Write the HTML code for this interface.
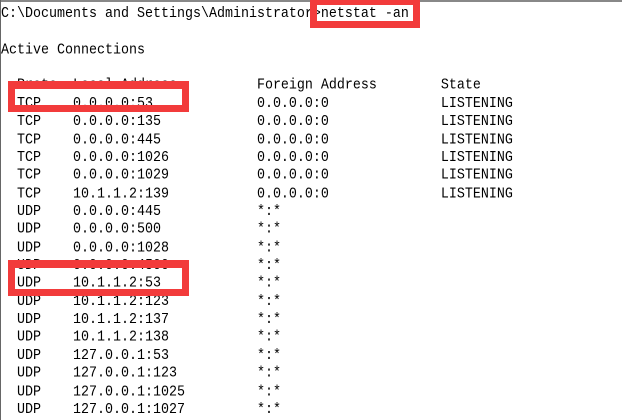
<!DOCTYPE html>
<html><head><meta charset="utf-8"><style>
html,body{margin:0;padding:0;background:#fff;width:622px;height:420px;overflow:hidden;position:relative}
pre{position:absolute;left:1px;top:6px;margin:0;font-family:"Liberation Mono",monospace;font-size:13.33px;line-height:18px;color:#000;letter-spacing:0;transform:scaleY(1.1);transform-origin:0 0}
.bl{position:absolute;left:0;top:0;width:1px;height:420px;background:#666}
.bt{position:absolute;left:0;top:0;width:622px;height:2px;background:#888}
.box{position:absolute;border:7px solid #f23b3b;box-sizing:border-box}
</style></head><body>
<div class="bt"></div><div class="bl"></div>
<pre style="line-height:16.36px">C:\Documents and Settings\Administrator&gt;netstat -an

Active Connections

  Proto  Local Address          Foreign Address        State
  TCP    0.0.0.0:53             0.0.0.0:0              LISTENING
  TCP    0.0.0.0:135            0.0.0.0:0              LISTENING
  TCP    0.0.0.0:445            0.0.0.0:0              LISTENING
  TCP    0.0.0.0:1026           0.0.0.0:0              LISTENING
  TCP    0.0.0.0:1029           0.0.0.0:0              LISTENING
  TCP    10.1.1.2:139           0.0.0.0:0              LISTENING
  UDP    0.0.0.0:445            *:*
  UDP    0.0.0.0:500            *:*
  UDP    0.0.0.0:1028           *:*
  UDP    0.0.0.0:4500           *:*
  UDP    10.1.1.2:53            *:*
  UDP    10.1.1.2:123           *:*
  UDP    10.1.1.2:137           *:*
  UDP    10.1.1.2:138           *:*
  UDP    127.0.0.1:53           *:*
  UDP    127.0.0.1:123          *:*
  UDP    127.0.0.1:1025         *:*
  UDP    127.0.0.1:1027         *:*</pre>
<div class="box" style="left:310px;top:-2px;width:110px;height:30px"></div>
<div class="box" style="left:8px;top:81px;width:181px;height:31px;border-top-width:8px"></div>
<div class="box" style="left:8px;top:260px;width:181px;height:36px;border-top-width:8px"></div>
</body></html>
